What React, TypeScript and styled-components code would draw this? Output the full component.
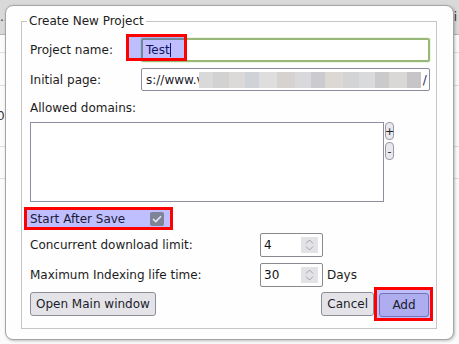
import styled, { createGlobalStyle } from 'styled-components';

const GlobalStyle = createGlobalStyle`
  body {
    margin: 0;
    font-family: "DejaVu Sans", "Liberation Sans", sans-serif;
    font-size: 12px;
    color: #1c1c1c;
    background: #fafafa;
  }
`;

// the page that sits behind the dialog
const Page = styled.div`
  position: relative;
  width: 459px;
  height: 344px;
  overflow: hidden;
  background: #fbfbfb;
`;

const TopBar = styled.div`
  height: 34px;
  background: #d9d9d9;
  border-bottom: 1px solid #b4b4b4;
  display: flex;
  justify-content: space-between;
  align-items: center;
  padding: 0 2px 0 0;
  color: #333;
`;

const BgRow = styled.div<{ $h: number }>`
  height: ${(p) => p.$h}px;
  border-bottom: 1px solid #dcdcdc;
  display: flex;
  align-items: center;
  color: #333;
`;

const Dialog = styled.div`
  position: absolute;
  left: 5px;
  top: 5px;
  width: 449px;
  height: 335px;
  box-sizing: border-box;
  border: 1px solid #a5a5a5;
  border-radius: 8px;
  background: #fefefe;
  box-shadow: 1px 1px 3px rgba(0, 0, 0, 0.25);
  padding: 8px 16px 0 15px;
`;

const Fieldset = styled.fieldset`
  margin: 0;
  padding: 0 6px 7px 8px;
  border: 1px solid #c6c6c6;
  min-width: 0;
`;

const Legend = styled.legend`
  padding: 0 2px;
  margin-left: -3px;
  line-height: 14px;
  color: #222;
`;

const Body = styled.div`
  display: flex;
  flex-direction: column;
`;

const FormRow = styled.div<{ $h: number; $top: number }>`
  display: flex;
  align-items: center;
  height: ${(p) => p.$h}px;
  margin-top: ${(p) => p.$top}px;
`;

const Label = styled.div<{ $w?: number }>`
  width: ${(p) => (p.$w ? `${p.$w}px` : 'auto')};
  flex: none;
  line-height: 14px;
  white-space: nowrap;
`;

const InputWrap = styled.div`
  position: relative;
  flex: 1;
  display: flex;
  align-items: center;
`;

const TextBox = styled.div<{ $focused?: boolean }>`
  flex: 1;
  box-sizing: border-box;
  height: ${(p) => (p.$focused ? 24 : 23)}px;
  display: flex;
  align-items: center;
  padding-left: ${(p) => (p.$focused ? 3 : 4)}px;
  background: #fff;
  border: ${(p) => (p.$focused ? '2px solid #97b878' : '1px solid #8c8c9c')};
  box-shadow: ${(p) => (p.$focused ? '0 0 0 1px #eef6e2' : 'none')};
  border-radius: 2px;
  color: #1a1a2a;
  white-space: nowrap;
  overflow: hidden;
`;

const Caret = styled.span`
  display: inline-block;
  width: 1px;
  height: 14px;
  background: #1a1a40;
`;

const Blur = styled.span`
  display: inline-block;
  width: 222px;
  height: 16px;
  margin-left: -5px;
  flex: none;
  background: linear-gradient(
    90deg,
    #d9d9d9 0 14px,
    #d2d2d2 14px 30px,
    #dcdad8 30px 46px,
    #cfd3d8 46px 60px,
    #dedede 60px 78px,
    #d6d2cf 78px 96px,
    #d9d9db 96px 112px,
    #cbcbcf 112px 126px,
    #dcd8d4 126px 144px,
    #d4d4d4 144px 160px,
    #d9dadc 160px 176px,
    #cacaca 176px 190px,
    #dad8d6 190px 208px,
    #c6c6c8 208px 222px
  );
`;

const Slash = styled.span`
  margin-left: 2px;
  color: #2a2a6a;
`;

const Highlight = styled.div<{ $top: number; $left: number; $w: number; $h: number }>`
  position: absolute;
  top: ${(p) => p.$top}px;
  left: ${(p) => p.$left}px;
  width: ${(p) => p.$w}px;
  height: ${(p) => p.$h}px;
  box-sizing: border-box;
  border: 3px solid #ff0000;
  background: rgba(0, 0, 255, 0.25);
  pointer-events: none;
`;

const TextArea = styled.div`
  width: 354px;
  height: 80px;
  box-sizing: border-box;
  border: 1px solid #8e8e9e;
  background: #fff;
`;

const PlusMinusCol = styled.div`
  align-self: flex-start;
  display: flex;
  flex-direction: column;
  gap: 2px;
  margin-left: 1px;
`;

const SmallButton = styled.div`
  width: 9px;
  height: 18px;
  box-sizing: border-box;
  border: 1px solid #9a9aa6;
  border-radius: 4px;
  background: #e8e8ee;
  display: flex;
  align-items: center;
  justify-content: center;
  font-size: 11px;
  line-height: 1;
  color: #222;
`;

const MarkedRow = styled.div`
  margin: 5px 0 0 -6px;
  width: 149px;
  height: 23px;
  box-sizing: border-box;
  border: 3px solid #ff0000;
  background: #bfbfff;
  display: flex;
  align-items: center;
  justify-content: space-between;
  padding: 0 6px 0 3px;
  color: #1c1c3a;
`;

const Check = styled.div`
  width: 14px;
  height: 14px;
  border-radius: 2px;
  background: #7e8398;
  display: flex;
  align-items: center;
  justify-content: center;
`;

const SpinBox = styled.div`
  width: 63px;
  height: 24px;
  box-sizing: border-box;
  border: 1px solid #8a8a8e;
  border-radius: 2px;
  background: #fff;
  display: flex;
  align-items: center;
  padding-left: 3px;
  color: #111;
`;

const SpinButtons = styled.div`
  margin: 3px 4px 3px auto;
  align-self: stretch;
  width: 17px;
  background: #e3e3e7;
  display: flex;
  flex-direction: column;
  align-items: center;
  justify-content: center;
  gap: 2px;
`;

const Unit = styled.span`
  margin-left: 4px;
`;

const ButtonRow = styled.div`
  display: flex;
  align-items: center;
  justify-content: space-between;
  height: 34px;
  margin-right: -3px;
`;

const Button = styled.div<{ $primary?: boolean }>`
  height: 24px;
  box-sizing: border-box;
  padding: 0 ${(p) => (p.$primary ? 0 : 5)}px;
  width: ${(p) => (p.$primary ? '50px' : 'auto')};
  border: 1px solid ${(p) => (p.$primary ? '#7474b4' : '#8e8e98')};
  border-radius: 3px;
  background: ${(p) => (p.$primary ? '#adadf0' : '#e4e4e8')};
  display: flex;
  align-items: center;
  justify-content: center;
  color: #1c1c2c;
`;

const RightButtons = styled.div`
  display: flex;
  align-items: center;
`;

const AddFrame = styled.div`
  box-sizing: border-box;
  height: 34px;
  border: 3px solid #ff0000;
  background: #bfbfff;
  padding: 3px 1px 1px 2px;
`;

const Chevron = ({ up }: { up?: boolean }) => (
  <svg width="9" height="5" viewBox="0 0 9 5">
    <path
      d={up ? 'M1 4.5 L4.5 1 L8 4.5' : 'M1 0.5 L4.5 4 L8 0.5'}
      fill="none"
      stroke="#a0a0aa"
      strokeWidth="1"
    />
  </svg>
);

function Spin({ value }: { value: string }) {
  return (
    <SpinBox>
      {value}
      <SpinButtons>
        <Chevron up />
        <Chevron />
      </SpinButtons>
    </SpinBox>
  );
}

export default function App() {
  return (
    <Page>
      <GlobalStyle />
      <TopBar>
        <span>..</span>
        <span>i</span>
      </TopBar>
      <BgRow $h={17} />
      <BgRow $h={32} />
      <BgRow $h={60}>
        <span style={{ marginLeft: -3 }}>0,</span>
      </BgRow>
      <BgRow $h={31} />

      <Dialog>
        <Fieldset>
          <Legend>Create New Project</Legend>
          <Body>
            <FormRow $h={26} $top={9}>
              <Label $w={111}>Project name:</Label>
              <InputWrap>
                <TextBox $focused>
                  Test
                  <Caret />
                </TextBox>
                <Highlight $top={-4} $left={-15} $w={61} $h={27} />
              </InputWrap>
            </FormRow>

            <FormRow $h={23} $top={5}>
              <Label $w={111}>Initial page:</Label>
              <InputWrap>
                <TextBox>
                  s://www.v
                  <Blur />
                  <Slash>/</Slash>
                </TextBox>
              </InputWrap>
            </FormRow>

            <FormRow $h={14} $top={10}>
              <Label>Allowed domains:</Label>
            </FormRow>

            <FormRow $h={80} $top={7}>
              <TextArea />
              <PlusMinusCol>
                <SmallButton>+</SmallButton>
                <SmallButton>-</SmallButton>
              </PlusMinusCol>
            </FormRow>

            <MarkedRow>
              Start After Save
              <Check>
                <svg width="10" height="8" viewBox="0 0 10 8">
                  <path d="M1 4 L3.8 6.6 L9 1.2" fill="none" stroke="#e4e6f0" strokeWidth="1.6" />
                </svg>
              </Check>
            </MarkedRow>

            <FormRow $h={24} $top={3}>
              <Label $w={230}>Concurrent download limit:</Label>
              <Spin value="4" />
            </FormRow>

            <FormRow $h={24} $top={6}>
              <Label $w={230}>Maximum Indexing life time:</Label>
              <Spin value="30" />
              <Unit>Days</Unit>
            </FormRow>

            <ButtonRow>
              <Button>Open Main window</Button>
              <RightButtons>
                <Button>Cancel</Button>
                <AddFrame>
                  <Button $primary>Add</Button>
                </AddFrame>
              </RightButtons>
            </ButtonRow>
          </Body>
        </Fieldset>
      </Dialog>
    </Page>
  );
}
